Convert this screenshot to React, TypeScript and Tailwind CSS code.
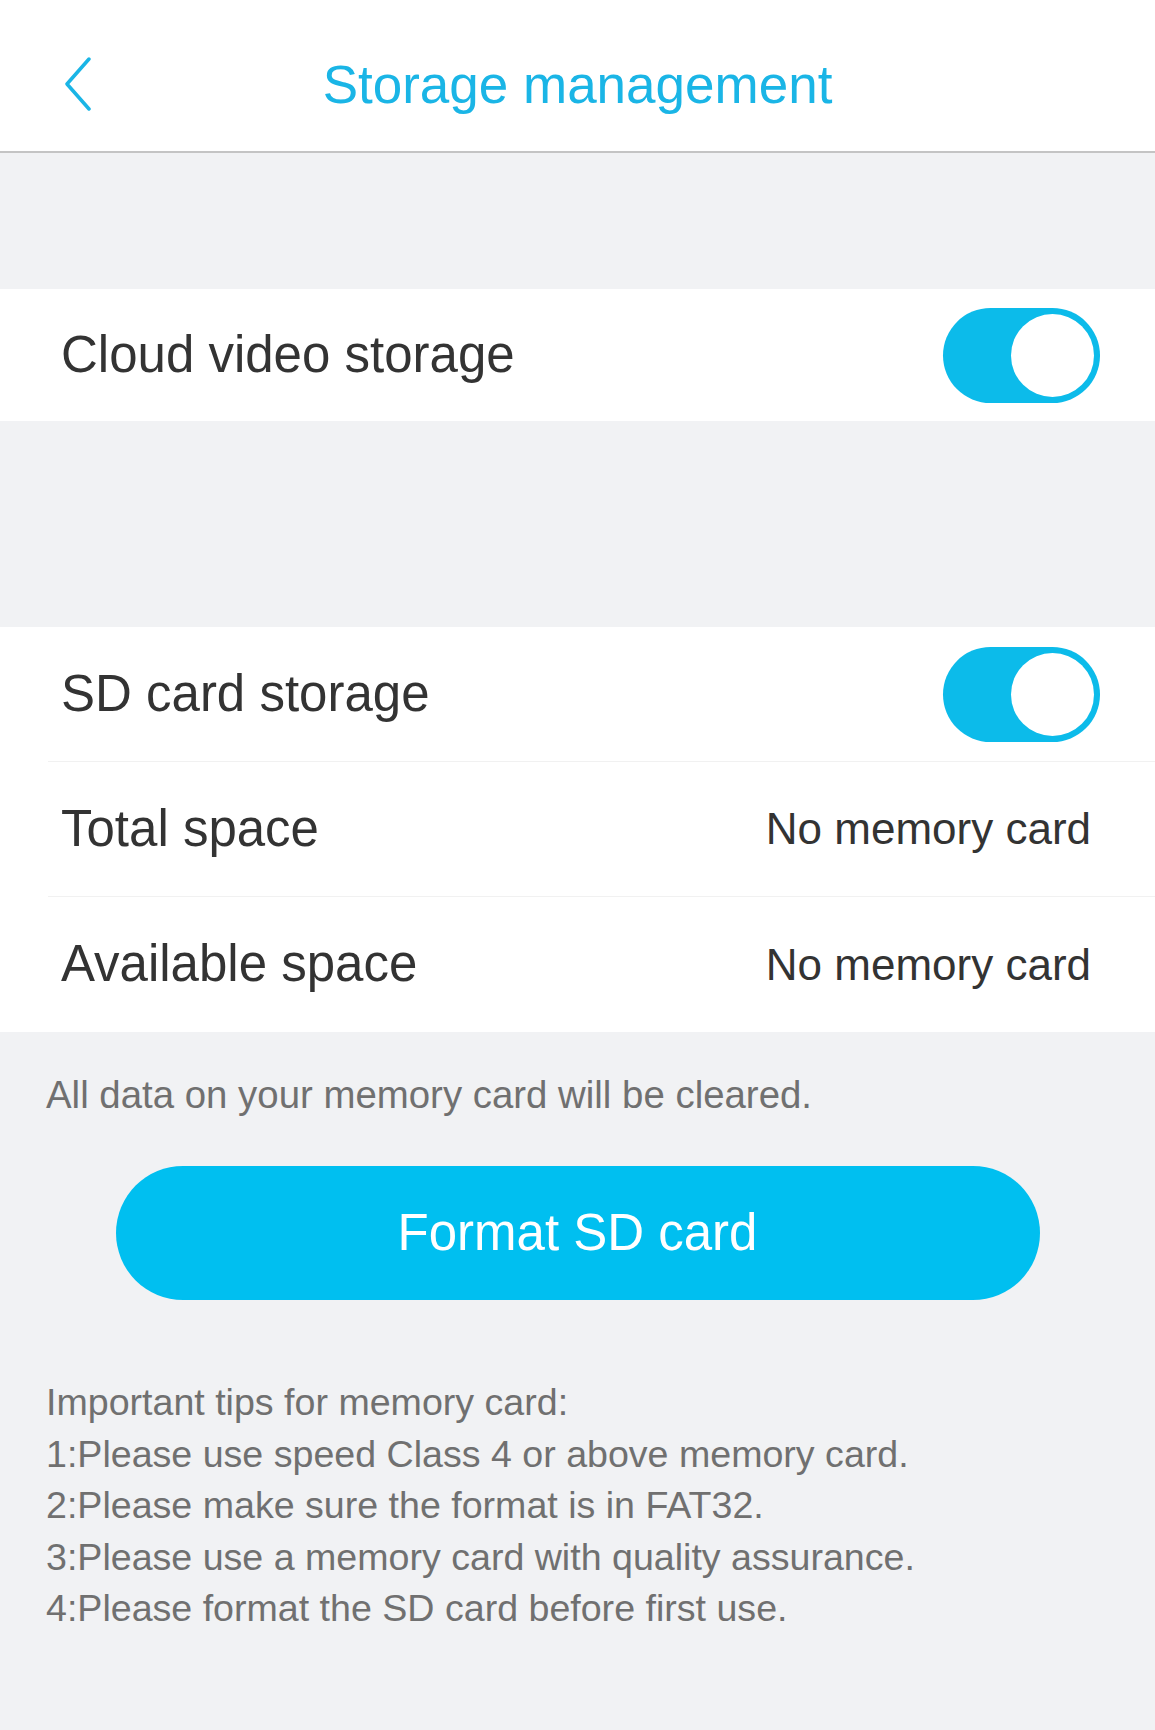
import React from 'react';

const Toggle: React.FC = () => (
  <div className="flex h-[95px] w-[157px] items-center justify-end rounded-full bg-[#0cbbea] pr-[6px]">
    <div className="h-[83px] w-[83px] rounded-full bg-white" />
  </div>
);

const Row: React.FC<{ label: string; value?: string; toggle?: boolean; divider?: boolean }> = ({
  label,
  value,
  toggle,
  divider,
}) => (
  <div className="bg-white pl-[48px]">
    <div
      className={`flex h-[135px] items-center justify-between pr-[55px] ${
        divider ? 'border-b border-[#f1f1f1]' : ''
      }`}
    >
      <span className="pl-[13px] text-[51px] text-[#333]">{label}</span>
      {toggle ? <Toggle /> : <span className="pr-[9px] text-[44px] text-[#333]">{value}</span>}
    </div>
  </div>
);

const tips = [
  'Important tips for memory card:',
  '1:Please use speed Class 4 or above memory card.',
  '2:Please make sure the format is in FAT32.',
  '3:Please use a memory card with quality assurance.',
  '4:Please format the SD card before first use.',
];

export default function App() {
  return (
    <div className="min-h-[1730px] w-[1155px] bg-[#f1f2f4] font-['Liberation_Sans',Arial,sans-serif]">
      {/* Header */}
      <header className="relative flex h-[153px] items-center justify-center border-b-2 border-[#c4c4c4] bg-white pt-[18px]">
        <button className="absolute left-[62px] top-[58px] flex h-[52px] w-[32px] items-center justify-center">
          <svg width="30" height="54" viewBox="0 0 30 54" fill="none">
            <path d="M26 2 L4 27 L26 52" stroke="#1ab5e6" strokeWidth="3.5" strokeLinecap="round" strokeLinejoin="round" />
          </svg>
        </button>
        <h1 className="text-[53px] text-[#1ab5e6]">Storage management</h1>
      </header>

      {/* Cloud */}
      <div className="pt-[136px]">
        <div className="bg-white pl-[48px]">
          <div className="flex h-[132px] items-center justify-between pr-[55px]">
            <span className="pl-[13px] text-[51px] text-[#333]">Cloud video storage</span>
            <Toggle />
          </div>
        </div>
      </div>

      {/* SD card */}
      <div className="pt-[206px]">
        <Row label="SD card storage" toggle divider />
        <Row label="Total space" value="No memory card" divider />
        <Row label="Available space" value="No memory card" />
      </div>

      <p className="mt-[37px] pl-[46px] text-[38.4px] leading-[52px] text-[#707070]">
        All data on your memory card will be cleared.
      </p>

      <div className="mt-[45px] flex justify-center">
        <button className="flex h-[134px] w-[924px] items-center justify-center rounded-full bg-[#00bff0] text-[51px] text-white">
          Format SD card
        </button>
      </div>

      <div className="mt-[77px] flex flex-col pl-[46px] pb-[80px]">
        {tips.map((t) => (
          <p key={t} className="text-[37.6px] leading-[51.5px] text-[#707070]">
            {t}
          </p>
        ))}
      </div>
    </div>
  );
}
